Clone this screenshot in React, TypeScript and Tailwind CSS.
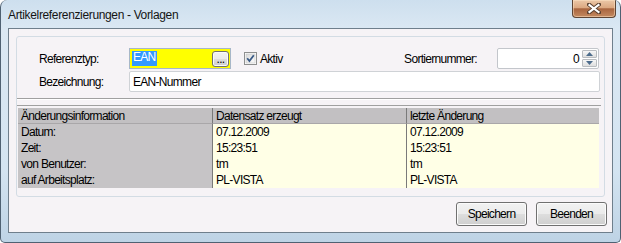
import React from 'react';

const txt = "text-[12px] tracking-[-0.7px] leading-none text-black";

function CloseButton() {
  return (
    <div className="w-[44px] h-[18px] rounded-b-[4px] border border-t-0 border-[#5e4534] bg-[linear-gradient(#ecc8a8,#dca982_45%,#a9653f_52%,#c48a60)] shadow-[inset_0_0_0_1px_rgba(255,230,200,0.5)] flex items-center justify-center">
      <svg width="14" height="11" viewBox="0 0 14 11">
        <path d="M2 1.5 L12 9.5 M12 1.5 L2 9.5" stroke="#5a4130" strokeWidth="4" strokeLinecap="square" />
        <path d="M2.5 2 L11.5 9 M11.5 2 L2.5 9" stroke="#ffffff" strokeWidth="2.2" strokeLinecap="square" />
      </svg>
    </div>
  );
}

function VistaButton({ label, small }: { label: string; small?: boolean }) {
  return (
    <div
      className={
        (small ? 'w-[17px] h-[16px] ' : 'w-[71px] h-[24px] ') +
        'rounded-[3px] border border-[#707070] bg-[linear-gradient(#f2f2f2,#ebebeb_48%,#dddddd_52%,#cfcfcf)] shadow-[inset_0_0_0_1px_#fbfbfb] flex items-center justify-center ' +
        txt
      }
    >
      {label}
    </div>
  );
}

function Checkbox() {
  return (
    <svg width="13" height="13" viewBox="0 0 13 13">
      <defs>
        <linearGradient id="cb" x1="0" y1="0" x2="1" y2="1">
          <stop offset="0" stopColor="#d9d9d9" />
          <stop offset="1" stopColor="#fdfdfd" />
        </linearGradient>
      </defs>
      <rect x="0.5" y="0.5" width="12" height="12" fill="#fff" stroke="#8e8f8f" />
      <rect x="2" y="2" width="9" height="9" fill="url(#cb)" stroke="#c4c4c4" strokeWidth="0.6" />
      <path d="M3.2 6.3 L5.4 9 L9.8 3.2" fill="none" stroke="#3a5a86" strokeWidth="1.8" />
    </svg>
  );
}

function Spinner() {
  return (
    <div className="w-[102px] h-[21px] bg-white border border-[#c3c6cb] rounded-[2px] flex items-center justify-end gap-[3px] pr-[1px]">
      <span className={txt}>0</span>
      <div className="w-[15px] h-[17px] flex flex-col gap-[1px]">
        {[0, 1].map((i) => (
          <div
            key={i}
            className="flex-1 rounded-[1px] border border-[#b9bcc0] bg-[linear-gradient(#f7f7f7,#dedede)] flex items-center justify-center"
          >
            <svg width="7" height="4" viewBox="0 0 7 4">
              <path d={i === 0 ? 'M0 4 L3.5 0 L7 4 Z' : 'M0 0 L3.5 4 L7 0 Z'} fill="#4d6c8c" />
            </svg>
          </div>
        ))}
      </div>
    </div>
  );
}

const rows = [
  ['Datum:', '07.12.2009', '07.12.2009'],
  ['Zeit:', '15:23:51', '15:23:51'],
  ['von Benutzer:', 'tm', 'tm'],
  ['auf Arbeitsplatz:', 'PL-VISTA', 'PL-VISTA'],
];

function InfoTable() {
  const cell = 'h-[16px] flex items-center pl-[3px] ' + txt;
  return (
    <div className="grid grid-cols-[194px_194px_193px]">
      <div className={cell + ' bg-[#c2c0c2] border-b border-[#a9a7a9]'}>Änderungsinformation</div>
      <div className={cell + ' bg-[#c2c0c2] border-b border-[#a9a7a9] border-l border-l-[#7a7a7a]'}>Datensatz erzeugt</div>
      <div className={cell + ' bg-[#c2c0c2] border-b border-[#a9a7a9] border-l border-l-[#7a7a7a]'}>letzte Änderung</div>
      {rows.map((r) => (
        <React.Fragment key={r[0]}>
          <div className={cell + ' bg-[#c6c4c6]'}>{r[0]}</div>
          <div className={cell + ' bg-[#ffffe6] border-l border-[#7a7a7a]'}>{r[1]}</div>
          <div className={cell + ' bg-[#ffffe6] border-l border-[#7a7a7a]'}>{r[2]}</div>
        </React.Fragment>
      ))}
    </div>
  );
}

export default function App() {
  return (
    <div className="w-[621px] h-[243px] flex flex-col overflow-hidden rounded-t-[7px] rounded-b-[5px] border border-t-0 border-[#4f6172] bg-[linear-gradient(#cddfee,#dbe8f3_12%,#d4e4f1_70%,#bed3e5)] font-['Liberation_Sans',Arial,sans-serif]">
      {/* Titelleiste */}
      <div className="h-[28px] flex items-start justify-between pl-[7px] pr-[4px]">
        <div className="mt-[9px] text-[12px] tracking-[-0.35px] leading-none text-[#141414]">
          Artikelreferenzierungen - Vorlagen
        </div>
        <CloseButton />
      </div>

      {/* Client-Bereich */}
      <div className="mx-[7px] h-[205px] border border-[#6f7f8c] bg-[#f6f3f6] flex flex-col">
        <div className="mt-[7px] ml-[7px] mr-[7px] h-[161px] border border-[#d3dce4] rounded-[3px] flex flex-col pt-[11px]">
          <div className="flex items-center h-[21px] pl-[22px] pr-[5px]">
            <div className={'w-[90px] ' + txt}>Referenztyp:</div>
            <div className="w-[102px] h-[21px] border border-[#a7b7c8] bg-[#ffff00] flex items-center justify-between pl-[2px] pr-[1px]">
              <span className={txt + ' h-[15px] px-[1px] bg-[#3399ff] !text-white leading-[15px]'}>EAN</span>
              <VistaButton label="..." small />
            </div>
            <div className="ml-[13px]">
              <Checkbox />
            </div>
            <div className={'ml-[3px] ' + txt}>Aktiv</div>
            <div className="flex-1" />
            <div className={'mr-[20px] ' + txt}>Sortiernummer:</div>
            <Spinner />
          </div>
          <div className="flex items-center h-[21px] mt-[2px] pl-[22px] pr-[4px]">
            <div className={'w-[90px] ' + txt}>Bezeichnung:</div>
            <div className={'flex-1 h-[21px] bg-white border border-[#cfd2d6] rounded-[2px] flex items-center pl-[3px] ' + txt}>
              EAN-Nummer
            </div>
          </div>
          <div className="mt-[6px] mr-[3px] h-[2px] border-t border-[#a0a0a0] border-b border-b-white" />
          <div className="mt-[5px] mr-[3px] border-t border-[#a0a0a0] pt-[2px] pl-[1px]">
            <InfoTable />
          </div>
        </div>
        <div className="mt-[5px] flex justify-end gap-[9px] pr-[5px]">
          <VistaButton label="Speichern" />
          <VistaButton label="Beenden" />
        </div>
      </div>
      <div className="flex-1" />
    </div>
  );
}
